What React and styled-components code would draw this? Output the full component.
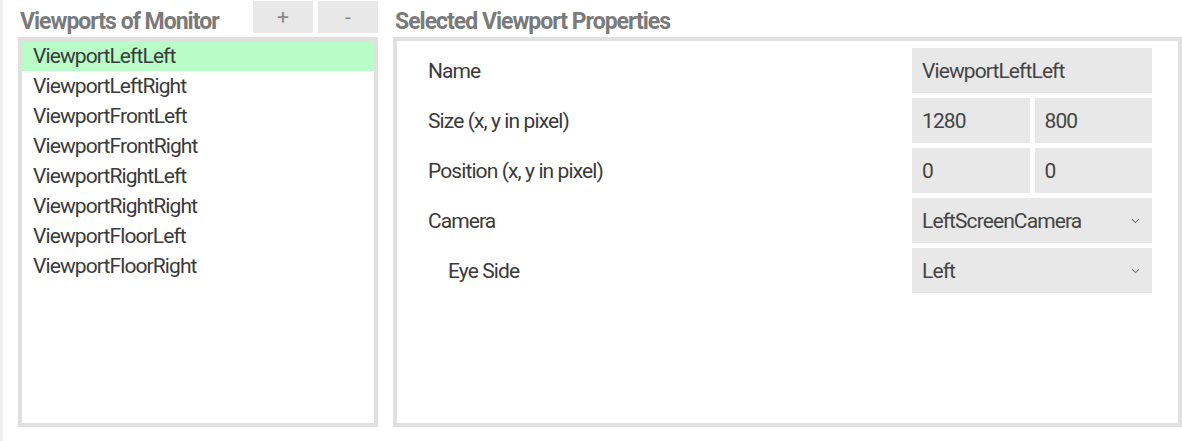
import React, { useState } from "react";
import styled, { createGlobalStyle } from "styled-components";

const GlobalStyle = createGlobalStyle`
  html, body {
    margin: 0;
    padding: 0;
    background: #ffffff;
  }
  body {
    font-family: Roboto, "Liberation Sans", sans-serif;
  }
`;

const Page = styled.div`
  display: grid;
  grid-template-columns: 360px 789px;
  gap: 15px;
  height: 441px;
  box-sizing: border-box;
  padding: 0 0 14px 15px;
  border-left: 3px solid #f0f0f0;
`;

const Column = styled.div`
  display: flex;
  flex-direction: column;
  min-height: 0;
`;

const HeaderRow = styled.div`
  display: flex;
  align-items: flex-start;
  height: 37px;
  flex: none;
`;

const Heading = styled.h2`
  margin: 0;
  padding: 9px 0 0 2px;
  flex: 1;
  font-size: 23px;
  font-weight: 700;
  letter-spacing: -1px;
  color: #7a7a7a;
  line-height: 26px;
`;

const SmallButton = styled.button`
  width: 60px;
  height: 32px;
  margin-top: 1px;
  margin-left: ${(p) => (p.$first ? "0" : "5px")};
  border: none;
  background: #e8e8e8;
  color: #8a8a8a;
  font-family: Roboto, sans-serif;
  font-size: 21px;
  padding: 0;
  cursor: pointer;
`;

const Panel = styled.div`
  flex: 1;
  border: 4px solid #e0e0e0;
  background: #ffffff;
  min-height: 0;
`;

const ListItem = styled.div`
  height: 30px;
  line-height: 31px;
  padding-left: 11px;
  font-size: 21px;
  letter-spacing: -0.9px;
  color: #3a3a3a;
  background: ${(p) => (p.$selected ? "#b8fcc8" : "transparent")};
  cursor: default;
`;

const PropGrid = styled.div`
  display: grid;
  grid-template-columns: 1fr 240px;
  grid-auto-rows: 45px;
  row-gap: 5px;
  padding: 7px 26px 0 31px;
`;

const Label = styled.div`
  display: flex;
  align-items: center;
  padding-top: 1px;
  padding-left: ${(p) => (p.$indent ? "20px" : "0")};
  font-size: 21px;
  letter-spacing: -0.9px;
  color: #3a3a3a;
`;

const FieldPair = styled.div`
  display: grid;
  grid-template-columns: ${(p) => (p.$split ? "1fr 1fr" : "1fr")};
  gap: 5px;
`;

const Field = styled.div`
  display: flex;
  align-items: center;
  justify-content: space-between;
  background: #e8e8e8;
  padding: 1px 12px 0 10px;
  font-size: 21px;
  letter-spacing: -0.9px;
  color: #444444;
`;

const Chevron = () => (
  <svg width="9" height="6" viewBox="0 0 9 6">
    <path d="M1 1.2 L4.5 4.6 L8 1.2" fill="none" stroke="#777" strokeWidth="1.1" />
  </svg>
);

const viewports = [
  "ViewportLeftLeft",
  "ViewportLeftRight",
  "ViewportFrontLeft",
  "ViewportFrontRight",
  "ViewportRightLeft",
  "ViewportRightRight",
  "ViewportFloorLeft",
  "ViewportFloorRight",
];

export default function App() {
  const [selected, setSelected] = useState(0);
  return (
    <>
      <GlobalStyle />
      <Page>
        <Column>
          <HeaderRow>
            <Heading>Viewports of Monitor</Heading>
            <SmallButton $first>+</SmallButton>
            <SmallButton>-</SmallButton>
          </HeaderRow>
          <Panel>
            {viewports.map((v, i) => (
              <ListItem key={v} $selected={i === selected} onClick={() => setSelected(i)}>
                {v}
              </ListItem>
            ))}
          </Panel>
        </Column>
        <Column>
          <HeaderRow>
            <Heading>Selected Viewport Properties</Heading>
          </HeaderRow>
          <Panel>
            <PropGrid>
              <Label>Name</Label>
              <FieldPair>
                <Field>{viewports[selected]}</Field>
              </FieldPair>
              <Label>Size (x, y in pixel)</Label>
              <FieldPair $split>
                <Field>1280</Field>
                <Field>800</Field>
              </FieldPair>
              <Label>Position (x, y in pixel)</Label>
              <FieldPair $split>
                <Field>0</Field>
                <Field>0</Field>
              </FieldPair>
              <Label>Camera</Label>
              <FieldPair>
                <Field>
                  LeftScreenCamera
                  <Chevron />
                </Field>
              </FieldPair>
              <Label $indent>Eye Side</Label>
              <FieldPair>
                <Field>
                  Left
                  <Chevron />
                </Field>
              </FieldPair>
            </PropGrid>
          </Panel>
        </Column>
      </Page>
    </>
  );
}
